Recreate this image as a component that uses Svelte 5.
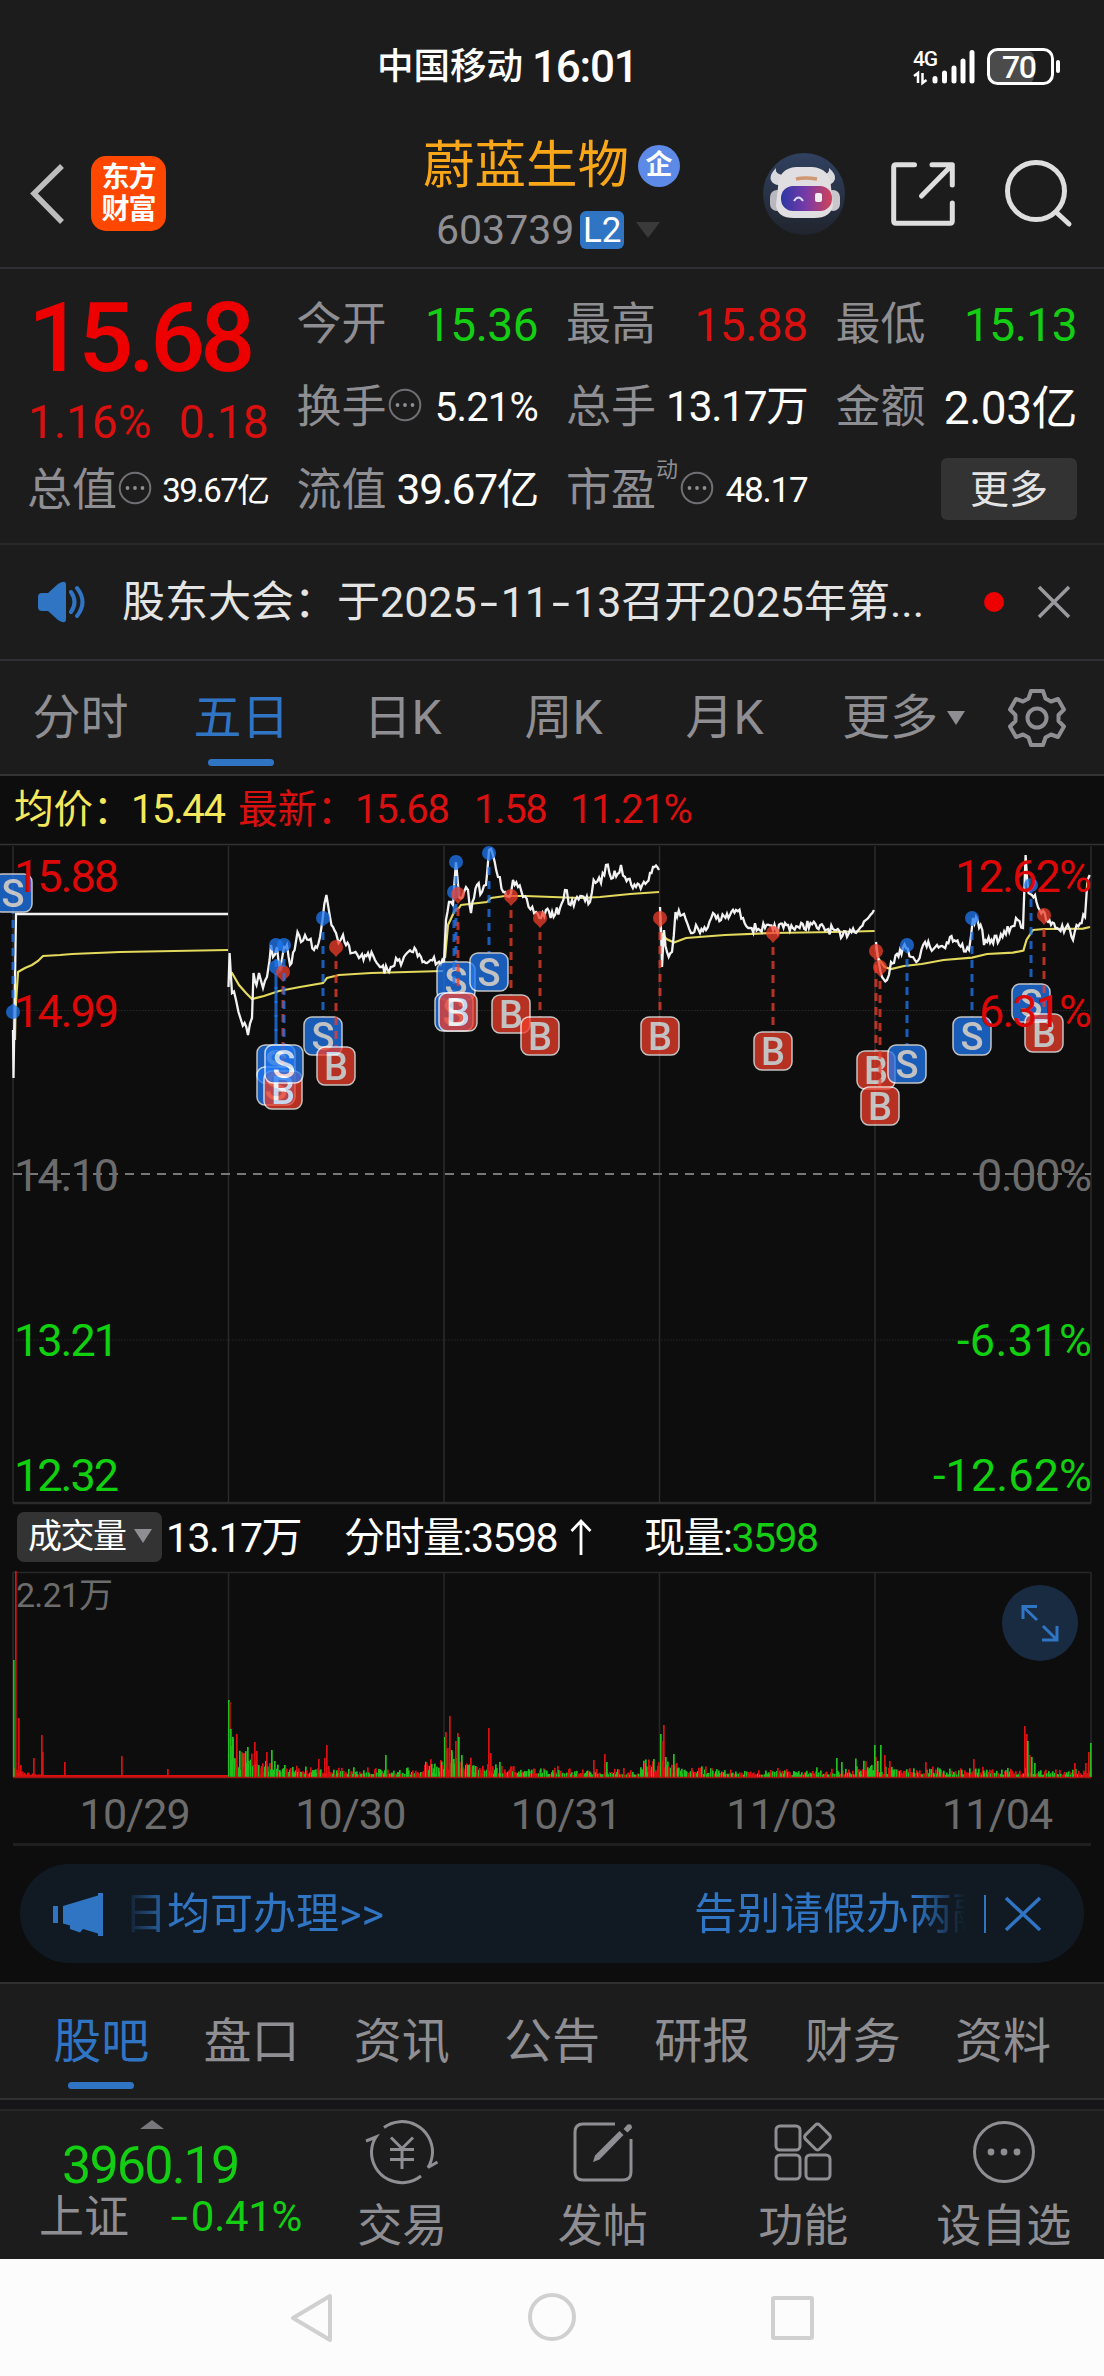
<script>
    const quotes = [
        {label: '今开', value: '15.36', color: 'green', size: 'xl'},
        {label: '最高', value: '15.88', color: 'red', size: 'xl'},
        {label: '最低', value: '15.13', color: 'green', size: 'xl'},
        {label: '换手', value: '5.21%', size: 'm', info: true},
        {label: '总手', value: '13.17万', size: 'l'},
        {label: '金额', value: '2.03亿', size: 'xl'},
    ]

    const periods = ['分时', '五日', '日K', '周K', '月K']
    const sections = ['股吧', '盘口', '资讯', '公告', '研报', '财务', '资料']
    const dates = ['10/29', '10/30', '10/31', '11/03', '11/04']
    const gridX = [13, 228.5, 444, 659.5, 875, 1091]

    // small fixed-seed generator so the intraday noise is stable
    let seed = 7
    const rand = () => {
        seed = (seed * 16807) % 2147483647
        return seed / 2147483647
    }

    const prices = [
        [[13, 1030], [13.5, 1078], [16, 914], [228, 914]],
        [[228.5, 987], [229.6, 953], [231, 977], [232, 993], [236, 1000], [238.5, 1012], [241, 1020], [244.6, 1023], [248, 1035], [252, 1018], [253.5, 973], [256.5, 985], [259, 973], [263, 988], [267, 977], [269.6, 960], [271, 945], [273, 957], [277, 947], [280, 970], [284, 947], [287, 945], [290, 965], [294.6, 950], [297.5, 932], [301, 942], [305, 935], [309, 940], [314, 950], [320, 937], [322.5, 920], [326.4, 895], [330, 917], [336, 933], [338.6, 943], [343, 935], [352, 953], [359, 958], [368, 953], [375, 960], [380, 967], [389, 972], [396, 958], [401, 965], [407, 953], [416, 950], [421, 957], [427, 963], [434, 957], [437.5, 963], [444, 962]],
        [[444, 962], [446, 920], [449, 902], [453, 905], [456, 862], [459, 897], [464, 892], [468, 890], [471, 913], [477, 885], [482, 892], [486, 885], [489, 850], [493, 855], [498, 877], [505, 892], [511, 893], [513, 880], [518, 887], [523, 897], [528.6, 907], [536, 912], [541, 918], [546, 910], [553.6, 917], [560, 908], [565, 890], [570.5, 905], [577, 897], [590, 902], [593.6, 880], [601, 883], [606, 865], [613, 878], [621, 865], [625, 877], [636, 887], [647, 882], [653, 867], [659, 870]],
        [[660, 907], [661, 930], [662, 967], [664, 930], [667, 952], [672, 952], [675.5, 912], [682, 915], [686, 920], [691, 933], [696, 925], [700, 933], [706, 930], [713, 913], [721, 920], [730, 915], [736, 910], [743, 918], [751.6, 928], [765, 928], [773, 930], [786.5, 925], [799.6, 928], [810.5, 923], [817, 928], [834.5, 930], [841, 938], [850, 930], [860.7, 927], [869, 917], [874, 910]],
        [[876, 942], [879, 963], [882, 977], [887, 980], [891, 962], [900, 950], [906, 948], [913, 957], [919.6, 958], [925, 942], [930, 947], [937, 945], [943.6, 947], [950, 937], [959, 945], [969, 950], [973, 918], [980.6, 925], [984, 945], [991.6, 940], [1002.5, 937], [1011, 927], [1017.7, 920], [1023, 928], [1025.6, 855], [1028.6, 893], [1035, 895], [1039.6, 910], [1048, 922], [1057, 928], [1065.7, 928], [1070, 930], [1073, 940], [1076.6, 925], [1085, 917], [1087.5, 880], [1089.7, 875]],
    ]

    const averages = [
        '15,1040 15.5,1010 18,972 25,968 32,965 38,961 43,956 60,955 72,954 120,952 228,950',
        '229,972 232,973 239,985 246,993 252,999 264,996 279,991 300,987 323,983 327,978 339,975 371,973 443,971',
        '445,958 448,925 455,910 459,908 461,905 487,902 491,898 505,896 525,896 580,898 600,897 630,894 659,892',
        '660,915 661,933 666.5,939 674,942.6 686,938 725,935 773,933 834,932 874.6,931',
        '876,946 878,958 884.6,967 891,969 904,966 921.7,964 943.6,960 972,957.6 987,954 1013,952.6 1023.4,950.6 1026.5,940 1033,930 1044,929 1083,928.6 1090,927',
    ]

    function jagged(points, day) {
        if (day === 0) return points.map(p => p.join()).join(' ')
        const out = [points[0]]
        for (let i = 1; i < points.length; i++) {
            const [x0, y0] = points[i - 1]
            const [x1, y1] = points[i]
            const steps = Math.floor((x1 - x0) / 1.5)
            for (let s = 1; s < steps; s++) {
                const k = s / steps
                out.push([(x0 + (x1 - x0) * k).toFixed(1), (y0 + (y1 - y0) * k + (rand() - 0.5) * 10).toFixed(1)])
            }
            out.push([x1, y1])
        }
        return out.map(p => p.join()).join(' ')
    }

    const lines = prices.map(jagged)

    // type, x, price y, badge y
    const trades = [
        ['S', 13, 1012, 893], ['S', 276, 945, 1064], ['S', 276, 967, 1086], ['B', 283, 972, 1090],
        ['S', 284, 945, 1064], ['S', 323, 918, 1036], ['B', 336, 947, 1066], ['S', 456, 862, 981],
        ['S', 454, 892, 1012], ['B', 458, 894, 1012], ['S', 489, 853, 972], ['B', 511, 896, 1014],
        ['B', 540, 918, 1036], ['B', 660, 918, 1036], ['B', 773, 933, 1051], ['B', 876, 951, 1070],
        ['B', 880, 967, 1106], ['S', 907, 945, 1064], ['S', 972, 918, 1036], ['S', 1031, 885, 1003],
        ['B', 1044, 915, 1033],
    ]

    const axis = [
        {y: 892, left: '15.88', right: '12.62%', rw: 137, color: '#dc0808'},
        {y: 1027, left: '14.99', right: '6.31%', rw: 113, color: '#dc0808'},
        {y: 1191, left: '14.10', right: '0.00%', rw: 115, color: '#6c6c6c'},
        {y: 1356, left: '13.21', right: '-6.31%', rw: 135, color: '#10d010'},
        {y: 1491, left: '12.32', right: '-12.62%', rw: 159, color: '#10d010'},
    ]

    const spikes = [
        [13, 117, 1], [15, 206, 0], [18, 59, 0], [20, 12, 0], [33, 19, 0], [41, 42, 0], [42, 25, 0], [64, 15, 0], [121, 21, 0], [167, 8, 0],
        [228, 77, 1], [229, 75, 0], [230, 48, 1], [232, 40, 1], [236, 43, 0], [241, 25, 0], [247, 30, 1], [254, 35, 0], [256, 26, 0], [266, 25, 0], [271, 27, 1], [318, 18, 0], [324, 19, 0],
        [326, 32, 0], [385, 22, 1], [444, 40, 1], [445, 45, 0], [449, 61, 0], [451, 27, 1], [455, 36, 0], [457, 44, 0], [458, 40, 1], [461, 22, 1], [488, 49, 0], [490, 24, 0],
        [499, 15, 1], [593, 17, 0], [604, 23, 0], [606, 15, 1], [660, 43, 1], [661, 36, 0], [663, 52, 0], [665, 20, 1], [673, 23, 1], [836, 19, 1], [841, 15, 1],
        [874, 32, 1], [880, 32, 1], [884, 22, 0], [889, 16, 0], [925, 15, 0], [973, 18, 0], [1024, 51, 0], [1026, 43, 0], [1027, 36, 1],
        [1029, 22, 0], [1031, 20, 1], [1034, 14, 1], [1074, 14, 0], [1085, 14, 0], [1088, 25, 0], [1090, 34, 1],
    ]

    const volumes = []
    for (let x = 14; x < 1091; x++) {
        const day = Math.min(4, Math.floor((x - 13) / 215.5))
        const t = x - gridX[day]
        let h = 2
        if (day === 0) {
            h = t < 30 ? 2 + rand() * 8 * Math.exp(-t / 12) : 2
        } else {
            h = 2 + rand() * rand() * 9 + rand() * [0, 34, 30, 22, 16][day] * Math.exp(-t / [1, 36, 28, 16, 18][day])
            if (t > 195 && day < 4) h += rand() * 13
        }
        volumes.push([x, h, day > 0 && rand() > 0.5 ? 1 : 0])
    }
    volumes.push(...spikes)
</script>

{#snippet more()}
    <svg class="more-dot" width="34" height="34" viewBox="0 0 34 34">
        <circle cx="17" cy="17" r="15.3" fill="none" stroke="#707074" stroke-width="2"/>
        <g fill="#8e8e93"><circle cx="9.5" cy="17" r="1.9"/><circle cx="17" cy="17" r="1.9"/><circle cx="24.5" cy="17" r="1.9"/></g>
    </svg>
{/snippet}

<div class="phone">
    <div class="status">
        <span class="carrier">中国移动</span>
        <span class="clock">16:01</span>
        <svg class="signal" width="150" height="40" viewBox="912 48 150 40">
            <text x="913" y="67" font-size="21" font-weight="500" fill="#fff" textLength="25">4G</text>
            <g stroke="#fff" stroke-width="5" stroke-linecap="round">
                <path d="M935 79.500v2.500M944.500 74v8M954 69v13M963 62v20M972 53.500v28.500"/>
            </g>
            <path d="M914 77l4-3v10M922.500 74v10l4-3" fill="none" stroke="#fff" stroke-width="2.500"/>
            <rect x="990" y="52" width="44" height="32" rx="6" fill="#4b4b4b"/>
            <rect x="988.500" y="50.500" width="64" height="34" rx="9" fill="none" stroke="#fff" stroke-width="3"/>
            <path d="M1058 63v9" stroke="#fff" stroke-width="4" stroke-linecap="round"/>
            <text x="1002" y="79" font-size="32" font-weight="500" fill="#fff" textLength="35">70</text>
        </svg>
    </div>

    <header>
        <svg class="back" width="36" height="62" viewBox="0 0 36 62">
            <path d="M33 3L5 30.500L33 59" fill="none" stroke="#bdbdbd" stroke-width="5.500"/>
        </svg>
        <div class="brand">东方<br>财富</div>
        <div class="title">
            <div class="name">蔚蓝生物<span class="corp">企</span></div>
            <div class="code">603739<span class="l2">L2</span><i class="tri"></i></div>
        </div>
        <svg class="tools" width="312" height="84" viewBox="762 152 312 84">
            <defs>
                <linearGradient id="sky" x1="0" y1="0" x2="0" y2="1"><stop offset="0" stop-color="#30415f"/><stop offset="1" stop-color="#20242d"/></linearGradient>
                <linearGradient id="visor"><stop offset="0" stop-color="#2b38a6"/><stop offset=".5" stop-color="#7a3aa6"/><stop offset="1" stop-color="#cf4358"/></linearGradient>
            </defs>
            <circle cx="804" cy="194" r="41" fill="url(#sky)"/>
            <path d="M776 168q-6 6-5.500 11q2 6 9 6l4-10q-9-1-7.500-7zM829 168q7 6 6 11q-2 6-9 6l-4-10q8-1 7-7z" fill="#d9d8dc"/>
            <rect x="770" y="190" width="14" height="21" rx="7" fill="#b9b8c0"/>
            <rect x="826" y="190" width="14" height="21" rx="7" fill="#c9c6cc"/>
            <path d="M778 187q1-19 18-20h16q18 1 19 20l2 18q-2 13-19 13h-20q-17 0-18-13z" fill="#e0dee1"/>
            <path d="M796 179q9-2 21 0" stroke="#cf9873" stroke-width="3.500" fill="none"/>
            <rect x="781" y="186" width="51" height="25" rx="12" fill="url(#visor)"/>
            <path d="M794 201q4.500-7 9 0" stroke="#d8e2ff" stroke-width="2" fill="none"/>
            <rect x="815" y="193" width="7" height="9" rx="2" fill="#eee"/>
            <g fill="none" stroke="#dedede" stroke-width="5" stroke-linecap="round" stroke-linejoin="round">
                <path d="M914.500 164.700H896q-2.300 0-2.300 2.300V221q0 2.300 2.300 2.300H950q2.300 0 2.300-2.300V203M932 164.700H952.300V185M952 165L921.500 196"/>
                <circle cx="1036" cy="191" r="28.500"/>
                <path d="M1056 212L1069 224"/>
            </g>
        </svg>
    </header>

    <div class="quote">
        <div class="last">
            <div class="price">15.68</div>
            <div class="change"><span>1.16%</span><span>0.18</span></div>
        </div>
        {#each quotes as q}
            <div class="cell">
                <span class="label">{q.label}</span>
                {#if q.info}{@render more()}{/if}
                <span class="value {q.size} {q.color ?? ''}">{q.value}</span>
            </div>
        {/each}
        <div class="cell">
            <span class="label">总值</span>{@render more()}
            <span class="value s">39.67亿</span>
        </div>
        <div class="cell">
            <span class="label">流值</span>
            <span class="value l">39.67亿</span>
        </div>
        <div class="cell">
            <span class="label">市盈</span><sup>动</sup>{@render more()}
            <span class="value s pe">48.17</span>
        </div>
        <div class="cell"><button class="more">更多</button></div>
    </div>

    <div class="notice">
        <svg width="50" height="44" viewBox="36 580 50 44">
            <path d="M38 597q0-4 4-4h6l10-9q8-5 8 1v34q0 6-8 1l-10-9h-6q-4 0-4-4z" fill="#3075c4"/>
            <path d="M71 592q7 10 0 20M77 588q11 14 0 28" fill="none" stroke="#3075c4" stroke-width="4" stroke-linecap="round"/>
        </svg>
        <span class="notice-text">股东大会：于2025<b>-</b>11<b>-</b>13召开2025年第...</span>
        <i class="dot"></i>
        <svg width="34" height="34" viewBox="0 0 34 34"><path d="M2 2L32 32M32 2L2 32" stroke="#9a9a9e" stroke-width="3.500"/></svg>
    </div>

    <div class="periods">
        {#each periods as p, i}
            <div class="tab" class:active={i === 1}>{p}</div>
        {/each}
        <div class="tab">更多<i class="tri small"></i></div>
        <svg width="60" height="62" viewBox="-30 -31 60 62" fill="none" stroke="#8e8e93" stroke-width="4" stroke-linejoin="round">
            <path d="M-6 -27H6L8.500 -19.500L14 -16.500L21 -19L27 -8.500L21.500 -3V3L27 8.500L21 19L14 16.500L8.500 19.500L6 27H-6L-8.500 19.500L-14 16.500L-21 19L-27 8.500L-21.500 3V-3L-27 -8.500L-21 -19L-14 -16.500L-8.500 -19.500Z"/>
            <circle r="9.500"/>
        </svg>
    </div>

    <div class="legend">
        <span class="avg a1">均价：</span><span class="avg n1">15.44</span>
        <span class="new a1">最新：</span><span class="new n2">15.68</span><span class="new n3">1.58</span><span class="new">11.21%</span>
    </div>

    <svg class="chart" width="1104" height="664" viewBox="0 842 1104 664">
        <g stroke="#2b2b2b" stroke-width="1.500">
            <path d="M0 844.500H1104" stroke="#333"/>
            {#each gridX as x}
                <path d="M{x} 846V1503"/>
            {/each}
            <path d="M13 1503H1091" stroke-width="2.500"/>
            <path d="M13 1010.500H1091M13 1340H1091" stroke="#292929" stroke-width="1" stroke-dasharray="1.500 1.500"/>
            <path d="M13 1174H1091" stroke="#777" stroke-width="2" stroke-dasharray="9 7"/>
        </g>
        {#each averages as a}
            <polyline points={a} fill="none" stroke="#e3d95c" stroke-width="2.200"/>
        {/each}
        {#each lines as l}
            <polyline points={l} fill="none" stroke="#f2f2f2" stroke-width="2.300"/>
        {/each}
        {#each trades as [type, x, y, by]}
            <g class="trade" class:buy={type === 'B'}>
                <path class="drop" d="M{x} {y}V{by > y ? by - 19 : by + 19}"/>
                <circle cx={x} cy={y} r="7"/>
                {#if type === 'B'}<path d="M{x - 6} {y + 3}L{x} {y + 10}L{x + 6} {y + 3}Z"/>{/if}
                <rect x={x - 19} y={by - 19} width="38" height="38" rx="8"/>
                <text {x} y={by + 13.500} text-anchor="middle">{type}</text>
            </g>
        {/each}
        {#each axis as a}
            <text class="axis" x="14" y={a.y} fill={a.color} textLength="105">{a.left}</text>
            <text class="axis" x={1092 - a.rw} y={a.y} fill={a.color} textLength={a.rw}>{a.right}</text>
        {/each}
    </svg>

    <div class="volume-head">
        <div class="picker">成交量<i class="tri small"></i></div>
        <span class="v1">13.17万</span>
        <span class="v2">分时量:3598</span>
        <svg width="22" height="38" viewBox="0 0 22 38"><path d="M11 37V3M1.500 13L11 3L20.500 13" fill="none" stroke="#fff" stroke-width="2.800"/></svg>
        <span class="v3">现量:<span class="green">3598</span></span>
    </div>

    <svg class="chart" width="1104" height="208" viewBox="0 1571 1104 208">
        <g stroke="#282828" stroke-width="1.500">
            <path d="M13 1572.500H1091"/>
            {#each gridX as x}
                <path d="M{x} 1572V1777"/>
            {/each}
        </g>
        <text x="16" y="1607" font-size="34" fill="#6c6c6c" textLength="97">2.21万</text>
        {#each volumes as [x, h, up]}
            <rect {x} y={1777 - h} width="1.700" height={h} fill={up ? '#1fc01f' : '#dc1010'}/>
        {/each}
        <path d="M13 1777.500H1091" stroke="#a01414" stroke-width="1.500"/>
        <circle cx="1040" cy="1623" r="38" fill="#182b41"/>
        <path d="M1023 1619V1606.500H1037M1023.500 1607L1037 1620M1042 1640H1057V1626M1056.500 1639.500L1043 1626" fill="none" stroke="#3075c4" stroke-width="3"/>
    </svg>

    <div class="dates">
        {#each dates as d}<span>{d}</span>{/each}
    </div>

    <div class="promo">
        <div class="pill">
            <svg width="52" height="44" viewBox="52 1892 52 44" fill="#3075c4">
                <path d="M53 1906h5v17h-5zM63 1906L98 1895.500V1893H103V1936H98V1933.500L83 1929L80 1932.500L70 1929V1925.500L63 1923.500Z"/>
            </svg>
            <div class="marquee"><span>日均可办理&gt;&gt;</span><span>告别请假办两融</span></div>
            <i class="bar"></i>
            <svg width="38" height="36" viewBox="0 0 38 36"><path d="M2 2L36 34M36 2L2 34" stroke="#3075c4" stroke-width="3.500"/></svg>
        </div>
    </div>

    <nav class="sections">
        {#each sections as s, i}
            <div class="tab" class:active={i === 0}>{s}</div>
        {/each}
    </nav>
    <div class="strip"></div>

    <footer>
        <div class="index">
            <i class="tri up"></i>
            <div class="points">3960.19</div>
            <div class="index-row"><span>上证</span><span class="green pct"><b>-</b>0.41%</span></div>
        </div>
        <div class="action">
            <svg width="76" height="66" viewBox="-38 -33 76 66" fill="none" stroke="#8e8e93" stroke-width="3">
                <path d="M-18 -24.500A30.500 30.500 0 0 1 30.500 1Q30 9 26 15.500L35.500 10M19 24A30.500 30.500 0 0 1 -30.500 -1Q-30 -9 -26 -15L-36 -11"/>
                <path d="M-11 -14.500L0 -3.500L11 -14.500M0 -4V17M-12 -2.500H12M-12 7.500H12"/>
            </svg>
            <span>交易</span>
        </div>
        <div class="action">
            <svg width="66" height="66" viewBox="-33 -33 66 66" fill="none" stroke="#8e8e93" stroke-width="3">
                <path d="M12 -28H-20Q-28 -28 -28 -20V20Q-28 28 -20 28H20Q28 28 28 20V-13"/>
                <path d="M-10 10L-8 3.500L16.500 -21L20.500 -17L-3.500 7.500ZM20.500 -23L24.500 -27.500Q29 -29 29 -24L24.500 -19.500Z" fill="#8e8e93" stroke="none"/>
            </svg>
            <span>发帖</span>
        </div>
        <div class="action">
            <svg width="66" height="66" viewBox="-33 -33 66 66" fill="none" stroke="#8e8e93" stroke-width="3">
                <rect x="-27" y="-26" width="24" height="24" rx="4"/>
                <rect x="-27" y="3" width="24" height="24" rx="4"/>
                <rect x="3" y="3" width="24" height="24" rx="4"/>
                <rect x="4.500" y="-25" width="20" height="20" rx="3" transform="rotate(45 14.500 -15)"/>
            </svg>
            <span>功能</span>
        </div>
        <div class="action">
            <svg width="66" height="66" viewBox="-33 -33 66 66">
                <circle r="29.500" fill="none" stroke="#8e8e93" stroke-width="3"/>
                <g fill="#8e8e93"><circle cx="-13" r="3.400"/><circle r="3.400"/><circle cx="13" r="3.400"/></g>
            </svg>
            <span>设自选</span>
        </div>
    </footer>

    <div class="system">
        <svg width="530" height="54" viewBox="287 2290 530 54" fill="none" stroke="#d0d0d0" stroke-width="4" stroke-linejoin="round">
            <path d="M330 2296V2340L293 2318Z"/>
            <circle cx="552" cy="2317" r="22"/>
            <rect x="773" y="2298" width="39" height="40" rx="1"/>
        </svg>
    </div>
</div>

<style>
    :global(body) {
        background: #1c1c1c;
    }

    .phone {
        width: 1104px;
        height: 2376px;
        overflow: hidden;
        background: #1c1c1c;
        color: #fff;
        font-family: Roboto, "Noto Sans CJK SC", sans-serif;
        line-height: 1;
        white-space: nowrap;
    }

    .phone div,
    header,
    nav,
    footer {
        box-sizing: border-box;
    }

    svg {
        display: block;
        flex: none;
    }

    .green {
        color: #14ce14;
    }

    .red {
        color: #d81010;
    }

    .status {
        display: flex;
        align-items: center;
        height: 134px;
        padding-left: 377px;
    }

    .carrier {
        width: 155px;
        font-size: 36.5px;
        font-weight: 500;
    }

    .clock {
        width: 380px;
        font-size: 44px;
        font-weight: 500;
        letter-spacing: -1.2px;
    }

    header {
        display: flex;
        align-items: center;
        height: 135px;
        padding: 0 30px 14px 29px;
        border-bottom: 2px solid #303034;
    }

    .brand {
        width: 75px;
        height: 75px;
        margin-left: 26px;
        padding-top: 6px;
        box-sizing: border-box;
        border-radius: 15px;
        background: #ff4700;
        font-size: 28px;
        font-weight: 700;
        line-height: 32px;
        text-align: center;
        letter-spacing: -1px;
    }

    .title {
        flex: 1;
        padding-left: 257px;
    }

    .name {
        display: flex;
        align-items: center;
        height: 71px;
        padding-top: 2px;
        font-size: 51.5px;
        color: #faa619;
    }

    .corp {
        width: 42px;
        height: 42px;
        margin-left: 9px;
        border-radius: 50%;
        background: #5c8ae6;
        color: #fff;
        font-size: 27px;
        font-weight: 700;
        line-height: 40px;
        text-align: center;
    }

    .code {
        display: flex;
        align-items: center;
        height: 57px;
        padding: 2px 0 0 13px;
        font-size: 41px;
        color: #8e8e93;
    }

    .l2 {
        width: 44px;
        height: 38px;
        margin-left: 6px;
        border-radius: 6px;
        background: #3075c4;
        color: #fff;
        font-size: 35px;
        line-height: 39px;
        text-align: center;
    }

    .tri {
        border: 12px solid transparent;
        border-top: 16px solid #3a3a3a;
        border-bottom: 0;
        margin-left: 12px;
    }

    .tri.small {
        border-width: 14px 9px 0;
        border-top-color: #8e8e93;
        margin-left: 9px;
    }

    .tri.up {
        display: block;
        width: 0;
        border: 12px solid transparent;
        border-top: 0;
        border-bottom: 9px solid #77777c;
        margin: 9px 0 0 140px;
    }

    .quote {
        display: grid;
        grid-template-columns: repeat(4, 240.5px);
        grid-auto-rows: 83px;
        column-gap: 29px;
        height: 276px;
        padding: 14px 27px 0 28px;
        border-bottom: 2px solid #292929;
    }

    .last {
        grid-row: span 2;
    }

    .price {
        height: 108px;
        font-size: 97px;
        font-weight: 500;
        line-height: 110px;
        letter-spacing: -5px;
        color: #ec0000;
    }

    .change {
        display: flex;
        justify-content: space-between;
        font-size: 46px;
        line-height: 62px;
        color: #d81010;
    }

    .cell {
        display: flex;
        align-items: center;
        font-size: 45px;
    }

    .label {
        margin-left: -1px;
        color: #8e8e93;
    }

    .more-dot {
        margin: -6px 0 0 1px;
    }

    .value {
        margin-left: auto;
        letter-spacing: -.5px;
    }

    .value.s {
        font-size: 33px;
        letter-spacing: -1.6px;
    }

    .value.pe {
        font-size: 35px;
        letter-spacing: -1.2px;
    }

    .value.m {
        font-size: 40px;
        letter-spacing: -.8px;
    }

    .value.l {
        font-size: 42.5px;
        letter-spacing: -1.3px;
    }

    .value.xl {
        font-size: 46px;
    }

    sup {
        align-self: flex-start;
        width: 23px;
        margin-top: 10px;
        font-size: 22px;
        line-height: 1;
        color: #8e8e93;
    }

    .more {
        width: 136px;
        height: 62px;
        margin: -3px 0 0 auto;
        padding: 0 0 5px;
        border: 0;
        border-radius: 6px;
        background: #333;
        color: #e4e4e4;
        font: 39px/1 "Noto Sans CJK SC", sans-serif;
    }

    .notice {
        display: flex;
        align-items: center;
        height: 116px;
        padding: 0 33px 0 36px;
        border-bottom: 2px solid #303034;
    }

    .notice-text {
        width: 863px;
        padding-left: 36px;
        font-size: 43px;
        color: #e4e4e4;
    }

    b {
        display: inline-block;
        width: 24px;
        font-weight: 400;
        text-align: center;
        transform: scaleX(1.5);
    }

    .dot {
        width: 20px;
        height: 20px;
        margin-right: 33px;
        border-radius: 50%;
        background: #ec0000;
    }

    .periods {
        display: grid;
        grid-template-columns: repeat(5, 161px) 197px 70px;
        align-items: center;
        justify-items: center;
        height: 115px;
        border-bottom: 2px solid #333;
    }

    .tab {
        position: relative;
        display: flex;
        align-items: center;
        height: 113px;
        font-size: 48px;
        color: #8e8e93;
    }

    .active {
        color: #3075c4;
    }

    .active::after {
        content: "";
        position: absolute;
        left: calc(50% - 33px);
        bottom: 8px;
        width: 66px;
        height: 7px;
        border-radius: 4px;
        background: #3075c4;
    }

    .legend {
        display: flex;
        align-items: center;
        height: 66px;
        padding: 2px 0 0 14px;
        background: #0d0d0d;
        font-size: 40px;
        letter-spacing: -1.4px;
    }

    .avg {
        color: #f6e85c;
    }

    .new {
        color: #d81010;
    }

    .a1 {
        width: 117px;
        font-size: 39.5px;
        letter-spacing: 0;
    }

    .n1 {
        width: 107px;
    }

    .n2 {
        width: 119px;
    }

    .n3 {
        width: 96px;
    }

    .chart {
        background: #0d0d0d;
    }

    .trade {
        opacity: .75;
        fill: #1f78f3;
    }

    .trade.buy {
        fill: #f03e2b;
    }

    .drop {
        stroke: #1f78f3;
        stroke-width: 3;
        stroke-dasharray: 8 6;
    }

    .buy .drop {
        stroke: #f03e2b;
    }

    .trade rect {
        stroke: #fff;
        stroke-width: 1.500;
    }

    .trade text {
        fill: #fff;
        font-size: 38px;
        font-weight: 500;
    }

    .axis {
        font-size: 45px;
    }

    .volume-head {
        display: flex;
        align-items: center;
        height: 65px;
        padding: 0 0 3px 17px;
        background: #0d0d0d;
        font-size: 41px;
        letter-spacing: -1.5px;
    }

    .picker {
        display: flex;
        align-items: center;
        width: 145px;
        height: 50px;
        padding: 0 0 2px 11px;
        border-radius: 7px;
        background: #333;
        font-size: 34px;
    }

    .picker .tri {
        margin-left: 8px;
    }

    .v1,
    .v2,
    .v3 {
        padding-top: 3px;
    }

    .v1 {
        width: 178px;
        padding-left: 4px;
    }

    .v2 {
        width: 221px;
        margin-right: 5px;
    }

    .v3 {
        margin-left: 52px;
    }

    .dates {
        display: flex;
        height: 67px;
        margin: 0;
        padding: 0 13px;
        background: linear-gradient(#1f1f1f, #1f1f1f) 13px 100% / 1078px 3px no-repeat #0d0d0d;
        color: #6c6c6c;
        font-size: 43px;
        line-height: 70px;
        letter-spacing: -.8px;
    }

    .dates span {
        flex: 1;
        padding-left: 28px;
        text-align: center;
    }

    .promo {
        height: 136px;
        padding: 18px 20px;
        background: #0d0d0d;
    }

    .pill {
        display: flex;
        align-items: center;
        height: 99px;
        padding: 0 42px 0 32px;
        border-radius: 50px;
        background: #111a23;
        color: #3075c4;
        font-size: 43px;
    }

    .marquee {
        display: flex;
        justify-content: space-between;
        width: 846px;
        margin-left: 20px;
        overflow: hidden;
        line-height: 60px;
        mask-image: linear-gradient(90deg, transparent, #000 50px, #000 790px, transparent 842px);
    }

    .marquee span:last-child {
        width: 275px;
    }

    .bar {
        width: 2px;
        height: 38px;
        margin: 0 18px 0 15px;
        background: #3075c4;
    }

    .sections {
        display: grid;
        grid-template-columns: repeat(7, 150.3px);
        justify-items: center;
        height: 118px;
        padding-left: 26px;
        border: solid #303030;
        border-width: 2px 0;
    }

    .sections .tab {
        height: 114px;
        padding-top: 2px;
    }

    .sections .active::after {
        bottom: 9px;
    }

    .strip {
        height: 9px;
        background: #161618;
    }

    footer {
        display: flex;
        height: 150px;
        border-top: 2px solid #262626;
        color: #8e8e93;
    }

    .index {
        width: 302px;
    }

    .points {
        height: 68px;
        padding-left: 62px;
        font-size: 52px;
        line-height: 74px;
        letter-spacing: -1.8px;
        color: #14ce14;
    }

    .index-row {
        display: flex;
        justify-content: space-between;
        align-items: center;
        height: 40px;
        padding-left: 39px;
        font-size: 45px;
    }

    .pct {
        font-size: 42px;
        letter-spacing: -.3px;
    }

    .action {
        display: flex;
        flex-direction: column;
        align-items: center;
        width: 200.5px;
        padding-top: 8px;
        font-size: 45px;
    }

    .action span {
        margin-top: 19px;
    }

    .system {
        display: flex;
        justify-content: center;
        height: 117px;
        padding-top: 31px;
        background: #fcfcfc;
    }
</style>
